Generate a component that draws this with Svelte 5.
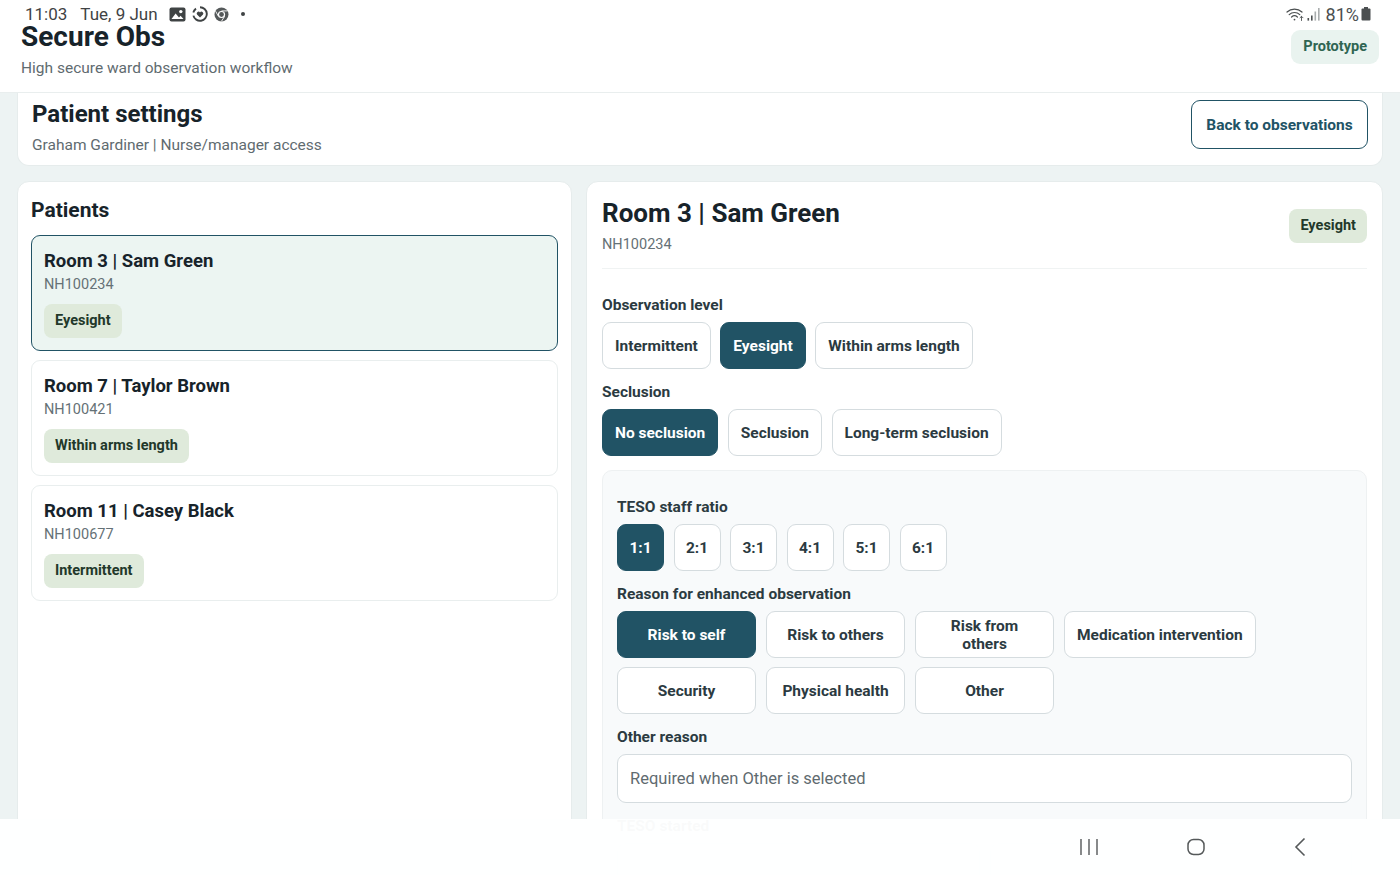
<script lang="ts">
  const patients = [
    { room: 'Room 3 | Sam Green', id: 'NH100234', level: 'Eyesight', active: true },
    { room: 'Room 7 | Taylor Brown', id: 'NH100421', level: 'Within arms length', active: false },
    { room: 'Room 11 | Casey Black', id: 'NH100677', level: 'Intermittent', active: false },
  ];

  const levels = ['Intermittent', 'Eyesight', 'Within arms length'];
  const seclusions = ['No seclusion', 'Seclusion', 'Long-term seclusion'];
  const ratios = ['1:1', '2:1', '3:1', '4:1', '5:1', '6:1'];
  const reasons = [
    'Risk to self',
    'Risk to others',
    'Risk from others',
    'Medication intervention',
    'Security',
    'Physical health',
    'Other',
  ];

  let level = $state('Eyesight');
  let seclusion = $state('No seclusion');
  let ratio = $state('1:1');
  let reason = $state('Risk to self');
</script>

<div class="page">
  <header class="topbar">
    <div>
      <h1>Secure Obs</h1>
      <p>High secure ward observation workflow</p>
    </div>
    <span class="proto">Prototype</span>
  </header>

  <main>
    <section class="settings card">
      <div>
        <h2>Patient settings</h2>
        <p>Graham Gardiner | Nurse/manager access</p>
      </div>
      <button class="back">Back to observations</button>
    </section>

    <div class="columns">
      <aside class="card patients">
        <h3>Patients</h3>
        {#each patients as p}
          <div class="patient" class:active={p.active}>
            <strong>{p.room}</strong>
            <span class="nh">{p.id}</span>
            <span class="tag">{p.level}</span>
          </div>
        {/each}
      </aside>

      <section class="card detail">
        <div class="detail-head">
          <div>
            <h2>Room 3 | Sam Green</h2>
            <span class="nh">NH100234</span>
          </div>
          <span class="tag">Eyesight</span>
        </div>

        <div class="label first">Observation level</div>
        <div class="options">
          {#each levels as o}
            <button class="opt" class:on={level === o} onclick={() => (level = o)}>{o}</button>
          {/each}
        </div>

        <div class="label">Seclusion</div>
        <div class="options">
          {#each seclusions as o}
            <button class="opt" class:on={seclusion === o} onclick={() => (seclusion = o)}>{o}</button>
          {/each}
        </div>

        <div class="teso">
          <div class="label top">TESO staff ratio</div>
          <div class="options">
            {#each ratios as o}
              <button class="opt ratio" class:on={ratio === o} onclick={() => (ratio = o)}>{o}</button>
            {/each}
          </div>

          <div class="label">Reason for enhanced observation</div>
          <div class="reasons">
            {#each reasons as o}
              <button class="opt" class:on={reason === o} onclick={() => (reason = o)}>{o}</button>
            {/each}
          </div>

          <div class="label">Other reason</div>
          <input placeholder="Required when Other is selected" />

          <div class="label">TESO started</div>
          <div class="started">
            <input />
            <input />
          </div>
        </div>
      </section>
    </div>
  </main>

  <!-- device chrome that sits over the app -->
  <div class="status">
    <div class="status-left">
      <span class="time">11:03</span>
      <span>Tue, 9 Jun</span>
      <svg width="17" height="15" viewBox="0 0 17 15">
        <rect x="0.5" y="0.5" width="16" height="14" rx="2" fill="#3f4344" />
        <circle cx="11.8" cy="4.6" r="1.7" fill="#fff" />
        <path d="M2.5 12 6.6 6.4 10 10.4 11.6 8.8 14.5 12Z" fill="#fff" />
      </svg>
      <svg width="16" height="16" viewBox="0 0 16 16">
        <path d="M8 1.2a6.8 6.8 0 1 1-6.6 8.4" fill="none" stroke="#3f4344" stroke-width="1.9" />
        <path d="M1.3 6.4A6.8 6.8 0 0 1 4 2.6" fill="none" stroke="#3f4344" stroke-width="1.9" />
        <path d="M8 11.4 5 8.4a1.8 1.8 0 0 1 3-2 1.8 1.8 0 0 1 3 2Z" fill="#3f4344" />
      </svg>
      <svg width="15" height="15" viewBox="0 0 15 15">
        <circle cx="7.5" cy="7.5" r="7" fill="#55595a" />
        <circle cx="7.5" cy="7.5" r="3.6" fill="#fff" />
        <circle cx="7.5" cy="7.5" r="2.4" fill="#55595a" />
        <path d="M7.5 3.9h6M4.4 9.3 1.6 4.2M10.6 9.3 7.4 14.4" stroke="#fff" stroke-width="0.9" />
      </svg>
      <span class="dot"></span>
    </div>
    <div class="status-right">
      <svg width="19" height="15" viewBox="0 0 19 15" fill="none" stroke="#4b4f50" stroke-width="1.2" stroke-linecap="round">
        <path d="M1 5a11 11 0 0 1 15 0" />
        <path d="M3.2 7.6a7.8 7.8 0 0 1 10.6 0" />
        <path d="M5.6 10a4.4 4.4 0 0 1 5.8 0" />
        <circle cx="8.5" cy="12.6" r="0.9" fill="#4b4f50" stroke="none" />
        <path d="M15.5 13.5v-4M14 10.8l1.5-1.5 1.5 1.5" stroke-width="0.9" />
      </svg>
      <svg width="14" height="14" viewBox="0 0 14 14">
        <rect x="0.5" y="11" width="1.6" height="2.6" fill="#4b4f50" />
        <rect x="4" y="8.5" width="1.6" height="5.1" fill="#4b4f50" />
        <rect x="7.5" y="4.5" width="1.6" height="9.1" fill="#a9adae" />
        <rect x="11" y="1" width="1.6" height="12.6" fill="#a9adae" />
      </svg>
      <span class="battery-text">81%</span>
      <svg width="10" height="14" viewBox="0 0 10 14">
        <rect x="3" y="0" width="4" height="2" fill="#4b4f50" />
        <rect x="0.5" y="1.5" width="9" height="12" rx="1" fill="#4b4f50" />
      </svg>
    </div>
  </div>

  <nav class="softkeys">
    <svg width="20" height="18" viewBox="0 0 20 18" fill="none" stroke="#55595a" stroke-width="1.4">
      <path d="M2 1v16M10 1v16M18 1v16" />
    </svg>
    <svg width="20" height="18" viewBox="0 0 20 18" fill="none" stroke="#55595a" stroke-width="1.5">
      <rect x="2" y="1.5" width="16" height="15" rx="5.5" />
    </svg>
    <svg width="14" height="20" viewBox="0 0 14 20" fill="none" stroke="#55595a" stroke-width="1.6">
      <path d="M11.5 1.5 3 10l8.5 8.5" />
    </svg>
  </nav>
</div>

<style>
  :global(body) {
    margin: 0;
    background: #edf3f3;
  }

  .page {
    position: relative;
    height: 875px;
    overflow: hidden;
    background: #edf3f3;
    font-family: Roboto, "Liberation Sans", sans-serif;
    color: #17232a;
  }

  .topbar {
    height: 93px;
    box-sizing: border-box;
    background: #fff;
    border-bottom: 1px solid #e9eeee;
    padding: 20px 21px 0;
    display: flex;
    justify-content: space-between;
    align-items: flex-start;
  }

  h1 {
    margin: 0;
    font-size: 28px;
    line-height: 34px;
    font-weight: 700;
  }

  .topbar p {
    margin: 4px 0 0;
    font-size: 15.5px;
    line-height: 20px;
    color: #5f6b70;
  }

  .proto {
    margin-top: 10px;
    padding: 0 12px;
    height: 34px;
    line-height: 34px;
    border-radius: 9px;
    background: #e9f3ef;
    color: #2f6552;
    font-size: 14.5px;
    font-weight: 700;
  }

  main {
    padding: 0 17px;
  }

  .card {
    background: #fff;
    border: 1px solid #e6ecec;
    border-radius: 12px;
    box-sizing: border-box;
  }

  .settings {
    height: 73px;
    border-top: 0;
    border-radius: 0 0 12px 12px;
    padding: 7px 14px 0 14px;
    display: flex;
    justify-content: space-between;
    align-items: flex-start;
  }

  .settings h2 {
    margin: 0;
    font-size: 24px;
    line-height: 28px;
    font-weight: 700;
  }

  .settings p {
    margin: 7px 0 0;
    font-size: 15.5px;
    line-height: 20px;
    color: #5f6b70;
  }

  .back {
    height: 49px;
    width: 177px;
    padding: 0;
    background: #fff;
    border: 1.3px solid #215365;
    border-radius: 9px;
    color: #215365;
    font: 700 15.5px Roboto, sans-serif;
  }

  .columns {
    display: grid;
    grid-template-columns: 555px 1fr;
    gap: 14px;
    margin-top: 15px;
  }

  .patients {
    height: 700px;
    padding: 17px 13px;
  }

  .patients h3 {
    margin: 0 0 13px;
    font-size: 21px;
    line-height: 23px;
    font-weight: 700;
  }

  .patient {
    display: flex;
    flex-direction: column;
    align-items: flex-start;
    box-sizing: border-box;
    height: 116px;
    padding: 13px 12px 0;
    margin-bottom: 9px;
    border: 1px solid #e9eeee;
    border-radius: 9px;
  }

  .patient.active {
    background: #ecf5f2;
    border: 1.3px solid #215365;
  }

  .patient strong {
    font-size: 18.5px;
    line-height: 24px;
    font-weight: 700;
  }

  .nh {
    font-size: 14.5px;
    line-height: 18px;
    color: #657176;
  }

  .patient .nh {
    margin-top: 3px;
  }

  .tag {
    display: inline-block;
    padding: 0 11px;
    height: 34px;
    line-height: 34px;
    border-radius: 8px;
    background: #dfeadb;
    color: #22382a;
    font-size: 14.5px;
    font-weight: 700;
  }

  .patient .tag {
    margin-top: 10px;
  }

  .detail {
    height: 700px;
    padding: 18px 15px;
  }

  .detail-head {
    display: flex;
    justify-content: space-between;
    align-items: center;
    height: 69px;
    box-sizing: border-box;
    padding-bottom: 17px;
    border-bottom: 1px solid #f0f3f3;
  }

  .detail-head h2 {
    margin: 0 0 5px;
    font-size: 26px;
    line-height: 32px;
    font-weight: 700;
  }

  .label {
    margin: 0 0 7px;
    font-size: 15.5px;
    line-height: 20px;
    font-weight: 700;
    color: #2b3a41;
  }

  .label.first {
    margin-top: 26px;
  }

  .label.top {
    margin-top: 0;
  }

  .options {
    display: flex;
    gap: 9.5px;
    margin-bottom: 13px;
  }

  .opt {
    height: 47px;
    padding: 0 12px;
    background: #fff;
    border: 1.3px solid #d5dcdf;
    border-radius: 9px;
    color: #2b3a41;
    font: 700 15.5px Roboto, sans-serif;
  }

  .opt.on {
    background: #215365;
    border-color: #215365;
    color: #fff;
  }

  .opt.ratio {
    width: 47px;
    padding: 0;
  }

  .teso {
    margin-top: 14px;
    padding: 26px 14px;
    background: #f8fafb;
    border: 1px solid #eef1f2;
    border-radius: 10px;
    height: 500px;
    box-sizing: border-box;
  }

  .reasons {
    display: grid;
    grid-template-columns: repeat(3, 139px) auto;
    justify-content: start;
    gap: 9px 10px;
    margin-bottom: 13px;
  }

  input {
    display: block;
    width: 100%;
    height: 49px;
    box-sizing: border-box;
    padding: 0 12px;
    background: #fff;
    border: 1.3px solid #d5dcdf;
    border-radius: 9px;
    font: 400 16.5px Roboto, sans-serif;
    margin-bottom: 13px;
  }

  input::placeholder {
    color: #5f6b70;
    opacity: 1;
  }

  .started {
    display: grid;
    grid-template-columns: 1fr 1fr;
    gap: 10px;
  }

  .status {
    position: absolute;
    top: 5px;
    left: 25px;
    right: 29px;
    height: 18px;
    display: flex;
    justify-content: space-between;
    align-items: center;
    font-size: 17px;
    color: #3f4344;
  }

  .status-left {
    display: flex;
    align-items: center;
    gap: 6px;
  }

  .status-left .time {
    margin-right: 7px;
  }

  .status-left span:nth-child(2) {
    margin-right: 5px;
  }

  .dot {
    width: 4px;
    height: 4px;
    border-radius: 50%;
    background: #3f4344;
    margin-left: 6px;
  }

  .status-right {
    display: flex;
    align-items: center;
    gap: 2px;
    color: #4b4f50;
  }

  .battery-text {
    font-size: 18px;
    margin-left: 3px;
  }

  .softkeys {
    position: absolute;
    left: 0;
    right: 0;
    bottom: 0;
    height: 56px;
    background: rgba(254, 255, 255, 0.975);
    display: flex;
    justify-content: flex-end;
    align-items: center;
    gap: 87px;
    padding-right: 93px;
    box-sizing: border-box;
  }
</style>
